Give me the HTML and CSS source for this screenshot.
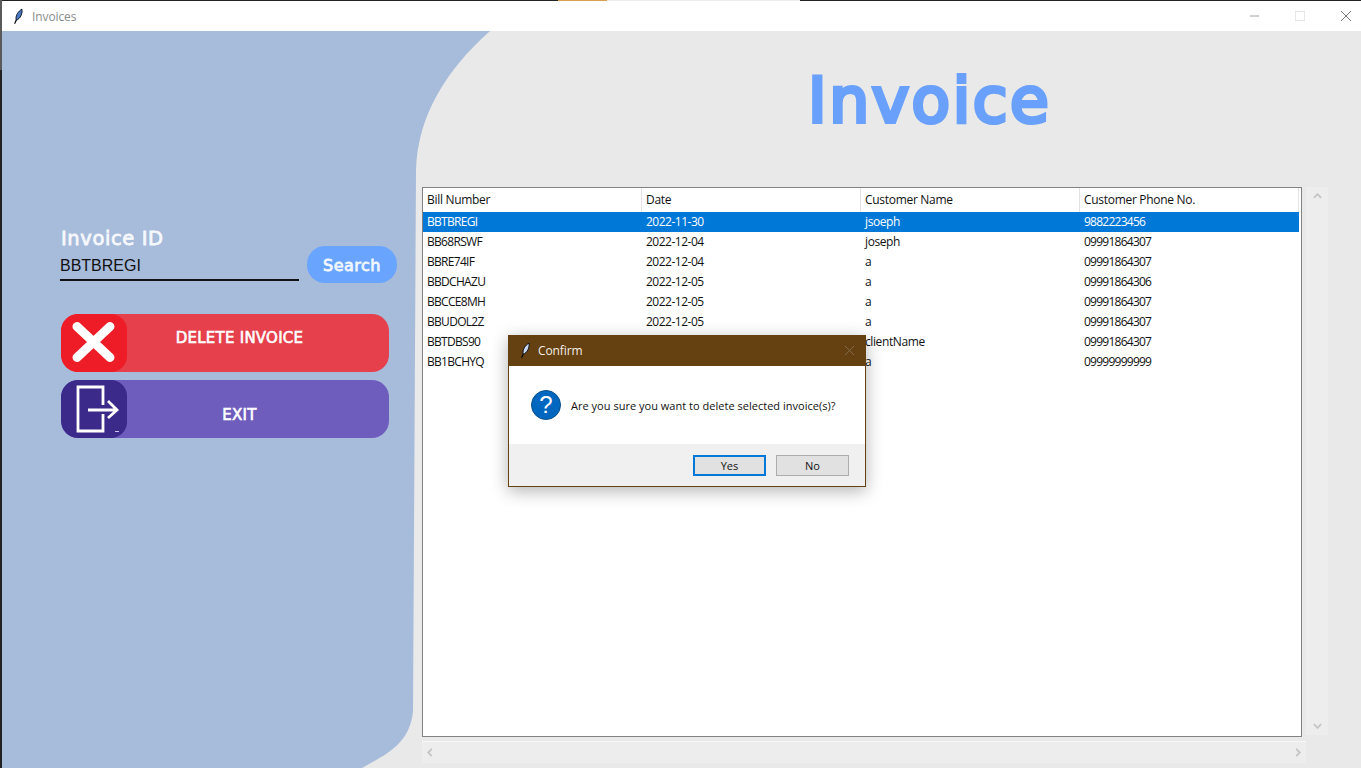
FILE: index.html
```html
<!DOCTYPE html>
<html lang="en">
<head>
<meta charset="utf-8">
<title>Invoices</title>
<link rel="stylesheet" href="styles.css">
</head>
<body>
<div class="desktop">
  <div class="top-accent"></div>
  <div class="top-white"></div>
  <div class="left-light"></div>
  <div class="window">
    <header class="titlebar">
      <svg class="feather" viewBox="0 0 16 20"><path d="M2 19 L4.2 14" stroke="#000" stroke-width="1.4" fill="none"/><path d="M4 14.5 C2.5 9 7 3 11 1 C12 6 9 13 4 14.5 Z" fill="#4a78c4" stroke="#05101f" stroke-width="1.2"/></svg>
      <span class="title-text">Invoices</span>
      <div class="controls">
        <span class="ctl"><svg viewBox="0 0 12 12"><path d="M1 6H11" stroke="#999" stroke-width="1"/></svg></span>
        <span class="ctl"><svg viewBox="0 0 12 12"><rect x="1.5" y="1.5" width="9" height="9" fill="none" stroke="#e6e6e6"/></svg></span>
        <span class="ctl"><svg viewBox="0 0 12 12"><path d="M1 1L11 11M11 1L1 11" stroke="#777" stroke-width="1"/></svg></span>
      </div>
    </header>
    <div class="client">
      <svg class="blob" viewBox="0 0 490 737" preserveAspectRatio="none"><path d="M0 0H488 C445 38 415 85 414 140 L411 680 C408 715 380 725 360 737 H0 Z" fill="#a7bbda"/></svg>
      <aside class="sidebar">
        <div class="label">Invoice ID</div>
        <div class="search-row">
          <div class="entry">BBTBREGI</div>
          <button class="search-btn">Search</button>
        </div>
        <button class="action delete">
          <span class="action-icon delete-icon"><svg viewBox="0 0 66 58"><path d="M16 12.5L49 43.5M49 12.5L16 43.5" stroke="#fff" stroke-width="9" stroke-linecap="round"/></svg></span>
          <span class="action-text delete-text">DELETE INVOICE</span>
        </button>
        <button class="action exit">
          <span class="action-icon exit-icon"><svg viewBox="0 0 66 58"><path d="M42 25V7H17V51H42V34" fill="none" stroke="#fff" stroke-width="2.8"/><path d="M27 30H55M47 21L56 30L47 38" fill="none" stroke="#fff" stroke-width="2.8"/><path d="M54 51.5H58" stroke="#c9c5e6" stroke-width="1"/></svg></span>
          <span class="action-text exit-text">EXIT</span>
        </button>
      </aside>
      <main class="main">
        <h1 class="heading">Invoice</h1>
        <div class="tree-area">
          <div class="tree">
            <div class="row head"><span>Bill Number</span><span>Date</span><span>Customer Name</span><span>Customer Phone No.</span></div>
            <div class="row selected"><span>BBTBREGI</span><span>2022-11-30</span><span>jsoeph</span><span>9882223456</span></div>
            <div class="row"><span>BB68RSWF</span><span>2022-12-04</span><span>joseph</span><span>09991864307</span></div>
            <div class="row"><span>BBRE74IF</span><span>2022-12-04</span><span>a</span><span>09991864307</span></div>
            <div class="row"><span>BBDCHAZU</span><span>2022-12-05</span><span>a</span><span>09991864306</span></div>
            <div class="row"><span>BBCCE8MH</span><span>2022-12-05</span><span>a</span><span>09991864307</span></div>
            <div class="row"><span>BBUDOL2Z</span><span>2022-12-05</span><span>a</span><span>09991864307</span></div>
            <div class="row"><span>BBTDBS90</span><span>2022-12-05</span><span>clientName</span><span>09991864307</span></div>
            <div class="row"><span>BB1BCHYQ</span><span>2022-12-05</span><span>a</span><span>09999999999</span></div>
          </div>
          <div class="vscroll">
            <svg viewBox="0 0 10 6"><path d="M1 5L5 1L9 5" fill="none" stroke="#c4c4c4" stroke-width="2"/></svg>
            <svg viewBox="0 0 10 6"><path d="M1 1L5 5L9 1" fill="none" stroke="#c4c4c4" stroke-width="2"/></svg>
          </div>
          <div class="hscroll">
            <svg viewBox="0 0 6 10"><path d="M5 1L1 5L5 9" fill="none" stroke="#c4c4c4" stroke-width="2"/></svg>
            <svg viewBox="0 0 6 10"><path d="M1 1L5 5L1 9" fill="none" stroke="#c4c4c4" stroke-width="2"/></svg>
          </div>
        </div>
      </main>
    </div>
  </div>
  <section class="dialog">
    <div class="dlg-title">
      <svg class="feather" viewBox="0 0 16 20"><path d="M2 19 L4.2 14" stroke="#000" stroke-width="1.4" fill="none"/><path d="M4 14.5 C2.5 9 7 3 11 1 C12 6 9 13 4 14.5 Z" fill="#c9d8ee" stroke="#05101f" stroke-width="1.2"/></svg>
      <span class="dlg-title-text">Confirm</span>
      <svg class="dlg-close" viewBox="0 0 12 12"><path d="M1 1L11 11M11 1L1 11" stroke="#85704f" stroke-width="1"/></svg>
    </div>
    <div class="dlg-body">
      <span class="q-icon">?</span>
      <span class="dlg-msg">Are you sure you want to delete selected invoice(s)?</span>
    </div>
    <div class="dlg-foot">
      <button class="dlg-btn primary">Yes</button>
      <button class="dlg-btn">No</button>
    </div>
  </section>
</div>
</body>
</html>
```
FILE: styles.css
```css
* { box-sizing: border-box; }
html, body { margin: 0; padding: 0; }
body { width: 1361px; height: 768px; overflow: hidden; font-family: "Open Sans", "Noto Sans", sans-serif; }
.desktop { position: relative; width: 1361px; height: 768px; background: #222; padding: 1px 0 0 2px; }
.top-accent { position: absolute; left: 558px; top: 0; width: 49px; height: 1px; background: #d9a050; }
.top-white { position: absolute; left: 607px; top: 0; width: 193px; height: 1px; background: #eee; }
.left-light { position: absolute; left: 0; top: 0; width: 2px; height: 70px; background: #5a5a5a; }
.window { width: 1359px; height: 767px; display: flex; flex-direction: column; background: #e9e9e9; }
.titlebar { height: 30px; flex: none; display: flex; align-items: center; background: #fff; padding-left: 11px; overflow: hidden; }
.feather { width: 13px; height: 17px; flex: none; }
.title-text { margin-left: 6px; font-size: 12px; letter-spacing: -.1px; color: #8c8c8c; }
.controls { margin-left: auto; margin-right: -8px; display: flex; flex: none; }
.ctl { width: 46px; height: 30px; display: flex; align-items: center; justify-content: center; }
.ctl svg { width: 12px; height: 12px; }
.ctl:nth-child(1) svg { width: 11px; }
.client { position: relative; flex: 1; display: flex; min-height: 0; }
.blob { position: absolute; left: 0; top: 0; width: 490px; height: 737px; }
.sidebar { position: relative; width: 420px; flex: none; padding: 197px 0 0 58px; display: flex; flex-direction: column; }
.label { font-family: "DejaVu Sans", sans-serif; font-size: 19.5px; line-height: 22px; letter-spacing: .6px; color: #f6f8fc; -webkit-text-stroke: .8px #f6f8fc; margin-left: 1px; }
.search-row { display: flex; align-items: flex-start; gap: 8px; margin-top: -4px; }
.entry { width: 239px; height: 35px; padding-top: 9px; border-bottom: 2px solid #111; font-family: "Liberation Sans", sans-serif; font-size: 16px; line-height: 22px; color: #111; }
.search-btn { width: 90px; height: 37px; border: 0; border-radius: 18px; background: #69a5ff; color: #f2f6ff; -webkit-text-stroke: .8px #f2f6ff; font-family: "DejaVu Sans", sans-serif; font-size: 16px; letter-spacing: .5px; padding: 2px 0 0; }
.action { width: 328px; height: 58px; margin-left: 1px; border: 0; border-radius: 17px; padding: 0; display: flex; color: #fff; text-align: center; overflow: hidden; }
.delete { background: #e5404b; margin-top: 31px; }
.exit { background: #6f5dbd; margin-top: 8px; }
.action-icon { width: 66px; height: 58px; flex: none; border-radius: 16px; display: block; }
.action-icon svg { display: block; width: 66px; height: 58px; }
.delete-icon { background: #ed1c26; }
.exit-icon { background: #3b2a8a; }
.action-text { width: 225px; font-family: "DejaVu Sans", sans-serif; font-size: 15px; letter-spacing: .25px; -webkit-text-stroke: .6px #fff; line-height: 20px; }
.delete-text { padding-top: 14px; }
.exit-text { padding-top: 25px; }
.main { position: relative; flex: 1; min-width: 0; display: flex; flex-direction: column; }
.heading { height: 156px; margin: 0; padding: 28px 0 0 386px; font-family: "DejaVu Sans", sans-serif; font-weight: 400; font-size: 63px; line-height: 84px; letter-spacing: 2.6px; color: #69a0fb; -webkit-text-stroke: 4px #69a0fb; }
.tree-area { display: grid; grid-template-columns: 880px 22px; grid-template-rows: 550px 22px; column-gap: 4px; row-gap: 4px; }
.tree { background: #fff; border: 1px solid #828282; padding-right: 2px; }
.row { display: grid; grid-template-columns: 219px 219px 219px 219px; height: 20px; font-size: 12px; line-height: 20px; color: #111; }
.row span { padding-left: 4px; white-space: nowrap; overflow: hidden; }
.row span:nth-child(1) { letter-spacing: -.7px; }
.row span:nth-child(2) { letter-spacing: -.5px; }
.row span:nth-child(3) { letter-spacing: -.4px; }
.row span:nth-child(4) { letter-spacing: -.75px; }
.head { height: 24px; line-height: 24px; }
.head span { border-right: 1px solid #e3e3e3; }
.row.head span { letter-spacing: -.3px; }
.selected { background: #0078d7; color: #fff; }
.vscroll { background: #ededed; height: 548px; display: flex; flex-direction: column; justify-content: space-between; align-items: center; padding: 6px 0; }
.vscroll svg { width: 9px; height: 6px; }
.hscroll { grid-column: 1 / 2; width: 884px; background: #ededed; border-top: 1px solid #f8f8f8; display: flex; justify-content: space-between; align-items: center; padding: 0 5px; }
.hscroll svg { width: 6px; height: 9px; }
.dialog { position: absolute; left: 508px; top: 335px; width: 358px; height: 152px; border: 1px solid #654011; background: #fff; box-shadow: 0 4px 16px rgba(0,0,0,.3); display: flex; flex-direction: column; }
.dlg-title { height: 31px; flex: none; margin: -1px -1px 0; background: #654011; display: flex; align-items: center; padding-left: 12px; }
.dlg-title-text { margin-left: 5px; font-size: 12px; letter-spacing: -.1px; color: #f4efe7; }
.dlg-close { width: 11px; height: 11px; margin-left: auto; margin-right: 11px; }
.dlg-body { flex: 1; display: flex; align-items: center; padding: 0 0 0 22px; }
.q-icon { width: 30px; height: 30px; border-radius: 50%; background: #0067c0; color: #fff; border: 1px solid #0a4f8a; font-family: "Liberation Sans", sans-serif; font-size: 24px; line-height: 28px; text-align: center; flex: none; }
.dlg-msg { margin-left: 10px; font-size: 11px; letter-spacing: .02px; line-height: 14px; padding-top: 2px; color: #111; white-space: nowrap; }
.dlg-foot { height: 42px; flex: none; background: #f0f0f0; display: flex; justify-content: flex-end; gap: 10px; padding: 11px 16px 0 0; }
.dlg-btn { width: 73px; height: 21px; padding: 0; background: #e1e1e1; border: 1px solid #adadad; font-family: "Open Sans", "Noto Sans", sans-serif; font-size: 11px; line-height: 17px; color: #111; }
.primary { border: 2px solid #0078d7; }
```
